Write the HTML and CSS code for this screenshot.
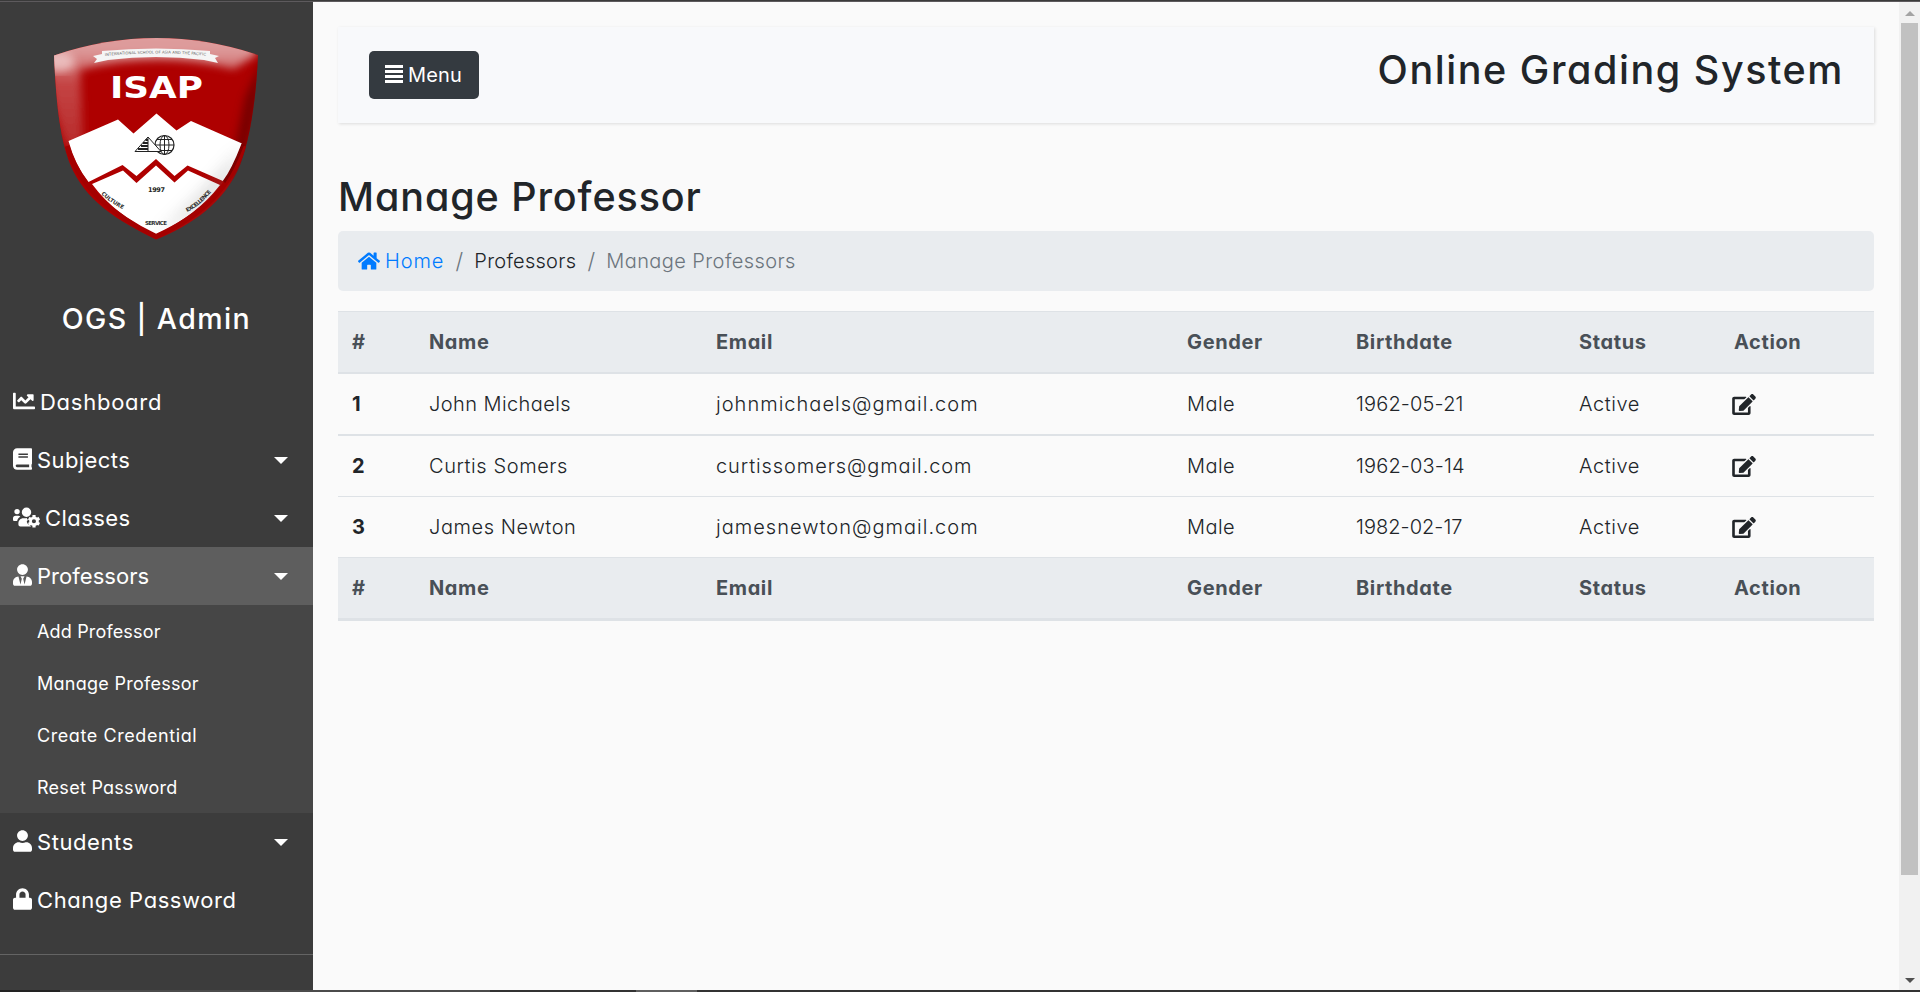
FILE: index.html
```html
<!DOCTYPE html>
<html lang="en">
<head>
<meta charset="utf-8">
<title>Online Grading System</title>
<link rel="stylesheet" href="styles.css">
</head>
<body>
<svg class="defs" aria-hidden="true">
  <symbol id="chart" viewBox="0 0 512 512"><path d="M496 384H64V80c0-8.800-7.200-16-16-16H16C7.200 64 0 71.200 0 80v336c0 17.700 14.300 32 32 32h464c8.800 0 16-7.200 16-16v-32c0-8.800-7.200-16-16-16zM464 96H345.900c-21.400 0-32.100 25.900-17 41l32.400 32.400L288 242.700l-73.400-73.400c-12.500-12.500-32.800-12.500-45.300 0l-68.700 68.700c-6.200 6.200-6.200 16.400 0 22.600l22.600 22.600c6.200 6.200 16.400 6.200 22.600 0L192 237.300l73.400 73.400c12.500 12.500 32.800 12.500 45.300 0l96-96 32.400 32.400c15.100 15.100 41 4.400 41-17V112c-.1-8.800-7.300-16-16.100-16z"/></symbol>
  <symbol id="book" viewBox="0 0 448 512"><path d="M448 360V24c0-13.300-10.700-24-24-24H96C43 0 0 43 0 96v320c0 53 43 96 96 96h328c13.300 0 24-10.700 24-24v-16c0-7.500-3.500-14.300-8.900-18.700-4.200-15.400-4.200-59.300 0-74.700 5.400-4.300 8.900-11.100 8.900-18.600zM128 134c0-3.300 2.700-6 6-6h212c3.300 0 6 2.700 6 6v20c0 3.300-2.700 6-6 6H134c-3.300 0-6-2.700-6-6v-20zm0 64c0-3.300 2.700-6 6-6h212c3.300 0 6 2.700 6 6v20c0 3.300-2.700 6-6 6H134c-3.300 0-6-2.700-6-6v-20zm253.400 250H96c-17.700 0-32-14.300-32-32 0-17.600 14.400-32 32-32h285.400c-1.900 17.100-1.900 46.900 0 64z"/></symbol>
  <symbol id="users" viewBox="0 0 640 512"><path fill-rule="evenodd" d="M96 64a64 64 0 1 0 0 128a64 64 0 1 0 0-128zM320 32a112 112 0 1 0 0 224a112 112 0 1 0 0-224zM64 224a64 64 0 0 0-64 64v32c0 17.700 14.300 32 32 32h66c6-45 35-82 75-101a64 64 0 0 0-45-27zM243 288c-64 0-115 52-115 115v29c0 26 22 48 48 48h250l-8-18c-20-6-42-18-58-34c-12-14-26-40-31-56c-5-20 8-32 22-41v-13c-13-9-27-20-23-38c-20 8-38 8-58 8c-9 0-18 0-27 0zM610 340c2 14 2 24 0 38l26 15c3 2 4 5 3 8c-7 22-18 41-33 58c-2 2-5 3-8 1l-26-15c-11 9-23 16-36 21v30c0 3-2 6-5 7c-22 5-45 5-66 0c-3-1-5-4-5-7v-30c-13-5-25-12-36-21l-26 15c-3 2-6 1-8-1c-15-17-26-36-33-58c-1-3 0-6 3-8l26-15c-2-14-2-28 0-42l-26-15c-3-2-4-5-3-8c7-22 18-41 33-58c2-2 5-3 8-1l26 15c11-9 23-16 36-21v-30c0-3 2-6 5-7c22-5 45-5 66 0c3 1 5 4 5 7v30c13 5 25 12 36 21l26-15c3-2 6-1 8 1c15 17 26 36 33 58c1 3 0 6-3 8zM496 308a49 49 0 1 0 0 98a49 49 0 1 0 0-98z"/></symbol>
  <symbol id="tie" viewBox="0 0 448 512"><path d="M224 256c70.700 0 128-57.300 128-128S294.700 0 224 0 96 57.300 96 128s57.300 128 128 128zm95.800 32.600L272 480l-32-136 32-56h-96l32 56-32 136-47.800-191.400C56.900 292 0 350.300 0 422.400V464c0 26.500 21.500 48 48 48h352c26.500 0 48-21.500 48-48v-41.600c0-72.100-56.900-130.400-128.200-133.800z"/></symbol>
  <symbol id="user" viewBox="0 0 448 512"><path d="M224 256c70.700 0 128-57.300 128-128S294.700 0 224 0 96 57.300 96 128s57.300 128 128 128zm89.600 32h-16.700c-22.200 10.200-46.900 16-72.900 16s-50.600-5.800-72.900-16h-16.700C60.200 288 0 348.200 0 422.400V464c0 26.500 21.500 48 48 48h352c26.500 0 48-21.500 48-48v-41.600c0-74.200-60.200-134.400-134.400-134.400z"/></symbol>
  <symbol id="lock" viewBox="0 0 448 512"><path d="M400 224h-24v-72C376 68.200 307.800 0 224 0S72 68.200 72 152v72H48c-26.500 0-48 21.500-48 48v192c0 26.500 21.500 48 48 48h352c26.500 0 48-21.500 48-48V272c0-26.500-21.500-48-48-48zm-104 0H152v-72c0-39.700 32.300-72 72-72s72 32.300 72 72v72z"/></symbol>
  <symbol id="home" viewBox="0 0 576 512"><path d="M280.370 148.260L96 300.110V464a16 16 0 0 0 16 16l112.060-.29a16 16 0 0 0 15.920-16V368a16 16 0 0 1 16-16h64a16 16 0 0 1 16 16v95.640a16 16 0 0 0 16 16.050L464 480a16 16 0 0 0 16-16V300L295.670 148.260a12.190 12.190 0 0 0-15.300 0zM571.600 251.470L488 182.560V44.050a12 12 0 0 0-12-12h-56a12 12 0 0 0-12 12v72.610L318.470 43a48 48 0 0 0-61 0L4.340 251.470a12 12 0 0 0-1.600 16.900l25.500 31A12 12 0 0 0 45.150 301l235.220-193.740a12.190 12.190 0 0 1 15.300 0L530.900 301a12 12 0 0 0 16.900-1.600l25.500-31a12 12 0 0 0-1.700-16.930z"/></symbol>
  <symbol id="edit" viewBox="0 0 576 512"><path d="M402.600 83.200l90.200 90.200c3.800 3.800 3.800 10 0 13.800L274.400 405.600l-92.800 10.300c-12.400 1.400-22.900-9.100-21.500-21.500l10.300-92.800L388.800 83.200c3.800-3.800 10-3.800 13.800 0zm162-22.900l-48.800-48.800c-15.200-15.200-39.900-15.200-55.200 0l-35.400 35.400c-3.800 3.800-3.800 10 0 13.800l90.200 90.200c3.800 3.800 10 3.800 13.800 0l35.400-35.400c15.200-15.300 15.200-40 0-55.200zM384 346.200V448H64V128h229.800c3.200 0 6.200-1.300 8.500-3.500l40-40c7.600-7.600 2.200-20.500-8.500-20.500H48C21.500 64 0 85.500 0 112v352c0 26.500 21.500 48 48 48h352c26.500 0 48-21.500 48-48V306.200c0-10.700-12.900-16-20.500-8.500l-40 40c-2.200 2.300-3.500 5.300-3.500 8.500z"/></symbol>
</svg>
<div class="edge edge-top"></div>
<div class="app">
  <aside class="sidebar">
    <svg class="logo" viewBox="0 0 207 204">
      <defs>
        <clipPath id="shield"><path d="M1 17.500Q103-17 205 17C203 62 197 101 187 127C172 164 139 187 103 201.500C65 183 32 163 17 126C6 98 3 61 1 17.500Z"/></clipPath>
        <filter id="soft" x="-20%" y="-20%" width="140%" height="140%"><feGaussianBlur stdDeviation="4"/></filter>
        <filter id="shade" x="-20%" y="-20%" width="140%" height="140%"><feGaussianBlur stdDeviation="8"/></filter>
        <linearGradient id="gloss" x1="0" y1="0" x2="0" y2="1"><stop offset="0" stop-color="#e0a0a0"/><stop offset=".25" stop-color="#dd9a9a"/><stop offset=".5" stop-color="#c44444"/><stop offset="1" stop-color="#b82a2a"/></linearGradient>
      </defs>
      <g clip-path="url(#shield)">
        <rect width="207" height="204" fill="#ae0000"/>
        <path d="M-10-20H196L204 16L181 31Q103 12 27 32L30 104L14 110Q-6 60-10-20Z" fill="url(#gloss)" filter="url(#soft)"/>
        <ellipse cx="6" cy="24" rx="16" ry="10" fill="#f3d6d6" opacity=".7" filter="url(#soft)"/>
        <path d="M212 14Q200 120 175 145L192 60Z" fill="#600000" opacity=".7" filter="url(#soft)"/>
        <path d="M15.500 103L65 81.500L80.500 95.500L103.500 75.500L123.500 92.500L138 83L189 105.500Q182 129 171 143.500L134.500 127.500L121.500 138L103 121L83.500 138L69.500 127L35.500 144Q22 127 15.500 103Z" fill="#fff"/>
        <path d="M39 146L70 132.500L83.500 145L103 127.500L121.500 144.500L135 132.500L167 147Q143 178 103 196.500Q62 177 39 146Z" fill="#fff"/>
        <path d="M190 110Q175 160 103 198Q150 158 190 110Z" fill="#777" opacity=".35" filter="url(#shade)"/>
        <path d="M14 108C27 151 61 178 103 198.500C150 177 177 150 191 108" fill="none" stroke="#a40000" stroke-width="5"/>
        <path d="M190 106Q180 132 171 144" fill="none" stroke="#7c0000" stroke-width="3"/>
      </g>
      <path d="M40 18L49 16V13Q103 8 157 13V16L166 18L162 20L165 25L151 22Q103 16 55 22L41 25L44 21Z" fill="#f5f5f5"/>
      <path id="arc" d="M52 18Q103 13 156 18" fill="none"/>
      <path id="left" d="M48 156Q57 165 73 173" fill="none"/>
      <path id="right" d="M134 174Q147 168 159 153" fill="none"/>
      <text class="tiny"><textPath href="#arc" textLength="101">INTERNATIONAL SCHOOL OF ASIA AND THE PACIFIC</textPath></text>
      <text class="isap" x="57" y="60" textLength="93" lengthAdjust="spacingAndGlyphs">ISAP</text>
      <g fill="none" stroke="#222">
        <circle cx="111.500" cy="107" r="9.500" stroke-width="1.200"/><ellipse cx="111.500" cy="107" rx="4.500" ry="9.500"/>
        <path d="M102 107H121M111.500 97.500V116.500M104 101.500H119M104 112.500H119"/>
        <path d="M95 99L82 113.500H108L95 99V113" fill="#fff"/><path d="M95 102H92.500M95 105H90M95 108H88M95 111H85" stroke-width="2"/>
      </g>
      <text class="year" x="95" y="153.500" textLength="17">1997</text>
      <text class="motto"><textPath href="#left" textLength="27">CULTURE</textPath></text>
      <text class="motto" x="92" y="186.500" textLength="22">SERVICE</text>
      <text class="motto"><textPath href="#right" textLength="32">EXCELLENCE</textPath></text>
    </svg>
    <h3 class="brand">OGS | Admin</h3>
    <nav class="menu">
      <a class="item t7"><svg class="ic w22"><use href="#chart"/></svg>Dashboard</a>
      <a class="item t4"><svg class="ic w20"><use href="#book"/></svg>Subjects<i class="caret"></i></a>
      <a class="item t4"><svg class="ic w28"><use href="#users"/></svg>Classes<i class="caret"></i></a>
      <a class="item active t1"><svg class="ic w20"><use href="#tie"/></svg>Professors<i class="caret"></i></a>
      <div class="sub">
        <a class="t2">Add Professor</a>
        <a class="t3">Manage Professor</a>
        <a class="t6">Create Credential</a>
        <a class="t3">Reset Password</a>
      </div>
      <a class="item t6"><svg class="ic w20"><use href="#user"/></svg>Students<i class="caret"></i></a>
      <a class="item t6"><svg class="ic w20"><use href="#lock"/></svg>Change Password</a>
    </nav>
  </aside>
  <main class="content">
    <header class="topbar">
      <button class="menu-btn t2"><svg class="bars" viewBox="0 0 18 18"><path d="M0 1.500H18M0 6.500H18M0 11.500H18M0 16.500H18"/></svg>Menu</button>
      <h1 class="title">Online Grading System</h1>
    </header>
    <h1 class="heading">Manage Professor</h1>
    <ol class="crumbs">
      <li class="home t9"><svg><use href="#home"/></svg>Home</li>
      <li class="sep">/</li>
      <li class="mid t3">Professors</li>
      <li class="sep">/</li>
      <li class="t4">Manage Professors</li>
    </ol>
    <table class="grid">
      <colgroup><col class="c1"><col class="c2"><col class="c3"><col class="c4"><col class="c5"><col class="c6"><col class="c7"></colgroup>
      <thead><tr><th>#</th><th>Name</th><th>Email</th><th>Gender</th><th>Birthdate</th><th>Status</th><th>Action</th></tr></thead>
      <tbody>
        <tr class="r1"><th>1</th><td class="t4">John Michaels</td><td class="t10">johnmichaels@gmail.com</td><td class="t4">Male</td><td class="t2">1962-05-21</td><td class="t6">Active</td><td><svg class="edit"><use href="#edit"/></svg></td></tr>
        <tr class="r2"><th>2</th><td class="t6">Curtis Somers</td><td class="t9">curtissomers@gmail.com</td><td class="t4">Male</td><td class="t2">1962-03-14</td><td class="t6">Active</td><td><svg class="edit"><use href="#edit"/></svg></td></tr>
        <tr class="r3"><th>3</th><td class="t6">James Newton</td><td class="t10">jamesnewton@gmail.com</td><td class="t4">Male</td><td class="t1">1982-02-17</td><td class="t6">Active</td><td><svg class="edit"><use href="#edit"/></svg></td></tr>
      </tbody>
      <tfoot><tr><th>#</th><th>Name</th><th>Email</th><th>Gender</th><th>Birthdate</th><th>Status</th><th>Action</th></tr></tfoot>
    </table>
  </main>
  <div class="scroll"><i class="up"></i><div class="track"><div class="thumb"></div></div><i class="down"></i></div>
</div>
<div class="edge edge-bottom"></div>
</body>
</html>
```
FILE: styles.css
```css
* { box-sizing: border-box; }
body {
  margin: 0;
  height: 992px;
  overflow: hidden;
  display: flex;
  flex-direction: column;
  background: #fafafa;
  color: #212529;
  font-family: Inter, "Noto Sans", sans-serif;
  font-feature-settings: "cv11", "ss03";
  font-size: 20px;
  font-weight: 300;
}
h1, h3, ol { margin: 0; padding: 0; font-weight: 500; }
.defs { position: absolute; width: 0; height: 0; }
svg { fill: currentColor; flex: none; }
.edge { height: 2px; flex: none; }
.edge-top { background: linear-gradient(#3a3a3a 50%, #5d5a5d 50%); }
.edge-bottom { background: linear-gradient(90deg, #222 60px, #4b4b4b 60px 490px, #333 490px 636px, #5f5f5f 636px 697px, #333 697px); }
.app { flex: 1; display: flex; min-height: 0; }

/* tracking steps */
.t1 { letter-spacing: .04px; }
.t2 { letter-spacing: .16px; }
.t3 { letter-spacing: .27px; }
.t4 { letter-spacing: .42px; }
.t6 { letter-spacing: .58px; }
.t7 { letter-spacing: .74px; }
.t9 { letter-spacing: .9px; }
.t10 { letter-spacing: 1.02px; }

.sidebar { width: 313px; flex: none; background: #3c3c3c; color: #fff; font-weight: 400; display: flex; flex-direction: column; }
.logo { width: 207px; height: 204px; margin: 36px 0 0 53px; }
.isap { font: 700 30px "DejaVu Sans", sans-serif; fill: #fff; }
.tiny { font: 3.800px "DejaVu Sans", sans-serif; fill: #666; }
.year { font: 700 6.500px "DejaVu Sans", sans-serif; fill: #222; }
.motto { font: 700 5.500px "DejaVu Sans", sans-serif; fill: #333; }
.brand { margin-top: 58px; height: 39px; line-height: 38px; font-size: 28.500px; letter-spacing: 1.400px; text-align: center; white-space: nowrap; }
.menu { margin-top: 34px; height: 582px; border-bottom: 1px solid #646464; }
.item { height: 58px; padding: 0 25px 0 13px; display: flex; align-items: center; font-size: 22px; white-space: nowrap; }
.ic { height: 22px; margin: -3px 5px 0 0; }
.w22 { width: 22px; }
.w20 { width: 19px; }
.w28 { width: 27px; }
.active { background: #5e5e5e; }
.caret { margin-left: auto; border: 7px solid transparent; border-top-color: #fff; border-bottom: 0; }
.sub { background: #464646; }
.sub a { display: flex; align-items: center; height: 52px; padding-left: 37px; font-size: 18px; }

.content { flex: 1; padding: 25px 25px 0; }
.topbar { height: 96px; padding: 0 30px 0 31px; background: #f8f9fb; box-shadow: 1px 1px 3px rgba(0, 0, 0, .12); display: flex; justify-content: space-between; align-items: center; }
.menu-btn { width: 110px; height: 48px; padding: 0 16px; border: 0; border-radius: 5px; background: #343a40; color: #fff; display: flex; align-items: center; gap: 5px; font-family: inherit; font-size: 20px; font-weight: 400; font-feature-settings: inherit; }
.bars { width: 18px; height: 18px; stroke: #fff; stroke-width: 3; margin-top: -2px; }
.title { font-size: 39.500px; font-weight: 470; margin-top: -10px; line-height: 48px; letter-spacing: 1.550px; }
.heading { margin-top: 50px; height: 58px; line-height: 48px; font-size: 39.500px; font-weight: 470; letter-spacing: .9px; }
.crumbs { height: 60px; padding: 0 20px; display: flex; align-items: center; background: #e9ecef; border-radius: 5px; list-style: none; color: #6c757d; font-weight: 300; }
.home { display: flex; align-items: center; color: #007bff; }
.home svg { width: 22px; height: 20px; margin-right: 5px; }
.sep { width: 30px; text-align: center; font-size: 22px; }
.mid { color: #212529; }

.grid { width: 1536px; margin-top: 20px; border-collapse: separate; border-spacing: 0; table-layout: fixed; }
.c1 { width: 77px; } .c2 { width: 287px; } .c3 { width: 471px; } .c4 { width: 169px; } .c5 { width: 223px; } .c6 { width: 155px; }
.grid th, .grid td { height: 61px; padding: 0 0 0 14px; text-align: left; border-top: 1px solid #dee2e6; }
.grid th { font-weight: 700; }
.grid thead th, .grid tfoot th { background: #e9ecef; color: #495057; letter-spacing: .62px; }
.grid thead th { height: 63px; border-bottom: 2px solid #dee2e6; }
.grid .r1 > * { height: 60px; border-top: 0; }
.grid .r2 > * { height: 62px; border-top-width: 2px; }
.grid tfoot th { height: 64px; border-bottom: 3px solid #dee2e6; }
.edit { width: 24px; height: 21px; margin-left: -2px; display: block; }

.scroll { width: 21px; background: #f1f1f1; display: flex; flex-direction: column; align-items: center; padding: 9px 0 7px; }
.track { flex: 1; width: 17px; padding-top: 7px; }
.thumb { height: 852px; background: #c1c1c1; }
.up, .down { border: 5px solid transparent; }
.up { border-top: 0; border-bottom-color: #a3a3a3; }
.down { border-bottom: 0; border-top-color: #505050; }
```
